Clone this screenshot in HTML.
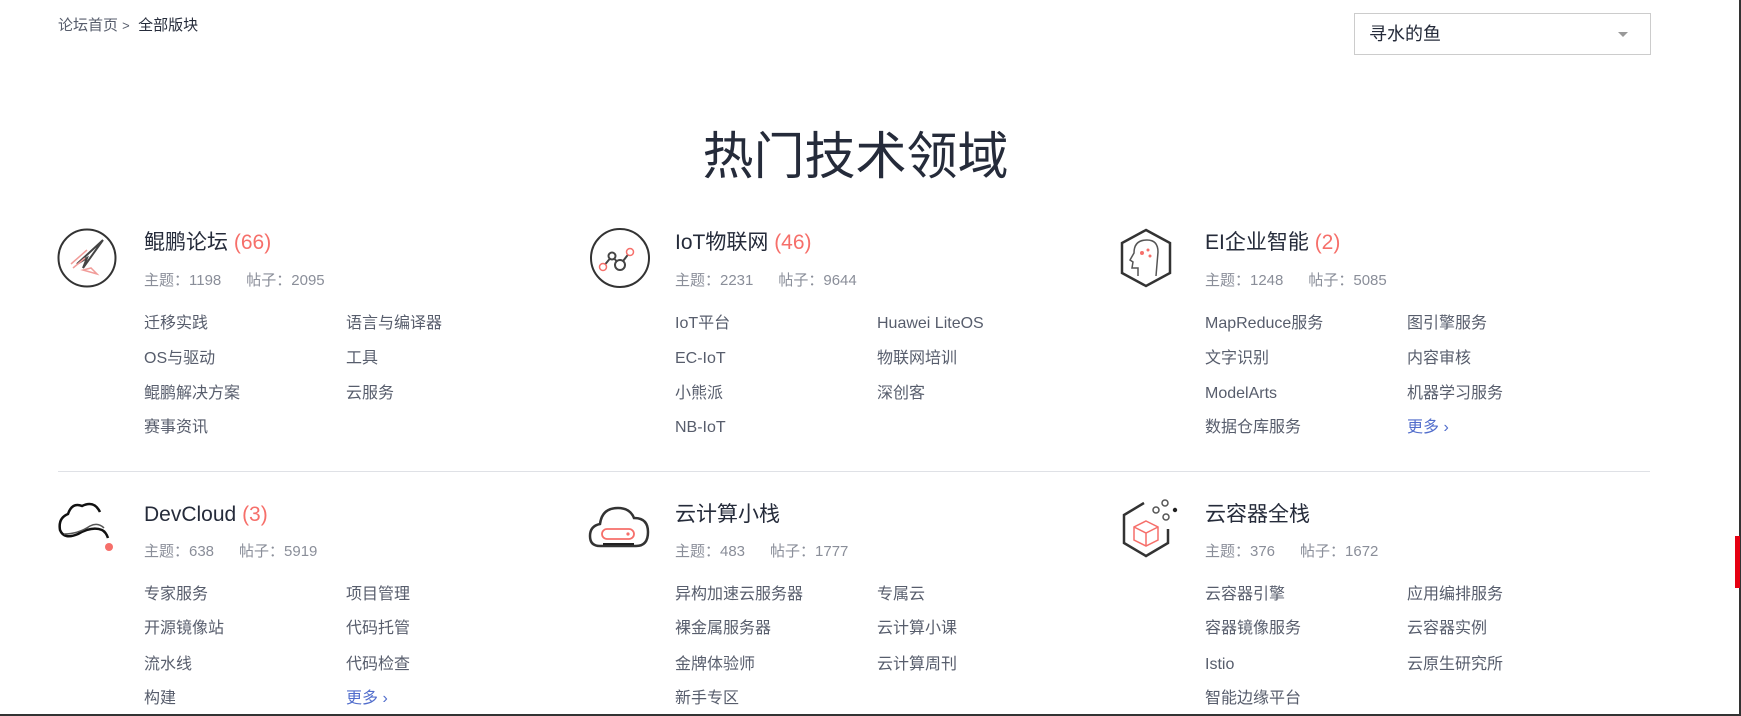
<!DOCTYPE html>
<html><head><meta charset="utf-8"><style>
*{margin:0;padding:0;box-sizing:border-box}
body{width:1741px;height:716px;background:#fff;position:relative;overflow:hidden;font-family:"Liberation Sans","Noto Sans CJK SC",sans-serif;color:#252b3a}
.a{position:absolute;white-space:nowrap}
.bc{top:16px;left:58px;font-size:15px;line-height:20px;color:#575d6c}
.sel{left:1354px;top:13px;width:297px;height:42px;border:1px solid #ccc;font-size:18px;line-height:40px;padding-left:14px;color:#252b3a}
.sel:after{content:"";position:absolute;right:22px;top:18px;border:5px solid transparent;border-top:5px solid #999}
.h1{top:127px;left:0;width:1711px;text-align:center;font-size:51px;line-height:60px;color:#252b3a}
.t{font-size:21px;line-height:28px;color:#252b3a}
.t span{color:#f66f6a}
.s{font-size:15px;line-height:20px;color:#8a8e99}
.l{font-size:16px;line-height:20px;color:#575d6c}
.m{color:#526ecc}
svg.a{overflow:visible}
</style></head><body>
<div class="a bc">论坛首页 <span style="font-size:13px">&gt;</span>&nbsp; <span style="color:#252b3a">全部版块</span></div>
<div class="a sel">寻水的鱼</div>
<div class="a h1">热门技术领域</div>
<div class="a" style="left:58px;top:471px;width:1592px;height:1px;background:#dfe1e6"></div>
<div class="a" style="left:1739px;top:0;width:2px;height:716px;background:#333"></div>
<div class="a" style="left:0;top:714px;width:1741px;height:2px;background:#333"></div>
<div class="a" style="left:1735px;top:536px;width:5px;height:52px;background:#e60012"></div>

<svg class="a" style="left:57px;top:228px" width="60" height="60" viewBox="0 0 60 60"><circle cx="30" cy="30" r="28.5" fill="none" stroke="#333" stroke-width="2"/><path d="M46 12 L20 36 L30 30 L26 40 Z" fill="none" stroke="#444" stroke-width="2"/><path d="M14 36 L30 22 M16 40 L28 30 M26 42 L40 46 L34 40 Z" fill="none" stroke="#f19c99" stroke-width="1.5"/></svg>
<svg class="a" style="left:589px;top:227px" width="62" height="62" viewBox="0 0 62 62"><circle cx="31" cy="31" r="29" fill="none" stroke="#333" stroke-width="2"/><path d="M14 40 L23 29 L31 38 L41 25" fill="none" stroke="#444" stroke-width="2"/><circle cx="14" cy="40" r="3.5" fill="#fff" stroke="#f66f6a" stroke-width="1.5"/><circle cx="23" cy="29" r="3.5" fill="#fff" stroke="#444" stroke-width="2"/><circle cx="31" cy="38" r="5" fill="#fff" stroke="#444" stroke-width="2"/><circle cx="41" cy="25" r="3.5" fill="#fff" stroke="#f66f6a" stroke-width="1.5"/></svg>
<svg class="a" style="left:1118px;top:228px" width="56" height="60" viewBox="0 0 56 60"><path d="M28 2 L52 15 L52 45 L28 58 L4 45 L4 15 Z" fill="none" stroke="#333" stroke-width="2.5"/><path d="M20 48 L20 40 L14 40 L15 34 L12 32 L16 25 Q16 12 29 12 Q40 12 40 24 L38 48" fill="none" stroke="#555" stroke-width="1.5"/><circle cx="24" cy="25" r="2" fill="#f66f6a"/><circle cx="30" cy="22" r="1.5" fill="#f66f6a"/><circle cx="32" cy="28" r="1.5" fill="#f66f6a"/></svg>
<svg class="a" style="left:58px;top:500px" width="60" height="56" viewBox="0 0 60 56"><path d="M42 12 Q36 0 24 6 Q14 2 10 14 Q0 18 2 30 Q6 40 20 34 Q34 26 44 30 Q48 32 50 38" fill="none" stroke="#111" stroke-width="2.5"/><path d="M6 34 Q20 34 32 26 Q40 22 46 28" fill="none" stroke="#555" stroke-width="1.5"/><circle cx="51" cy="47" r="4" fill="#f66f6a"/></svg>
<svg class="a" style="left:588px;top:502px" width="62" height="50" viewBox="0 0 62 50"><path d="M12 44 Q2 44 2 34 Q2 24 12 22 Q14 6 30 6 Q42 6 46 16 Q60 16 60 30 Q60 44 48 44 Z" fill="none" stroke="#333" stroke-width="2.5"/><rect x="14" y="27" width="32" height="10" rx="5" fill="none" stroke="#f66f6a" stroke-width="1.8"/><circle cx="40" cy="32" r="1.6" fill="#f66f6a"/><path d="M15 42 L46 42" stroke="#222" stroke-width="2"/></svg>
<svg class="a" style="left:1120px;top:499px" width="62" height="62" viewBox="0 0 62 62"><path d="M24 4 L4 16 L4 44 L26 57 L48 44 L48 30" fill="none" stroke="#333" stroke-width="2.5"/><path d="M26 22 L38 28 L38 41 L26 47 L14 41 L14 28 Z M14 28 L26 34 L38 28 M26 34 L26 47" fill="none" stroke="#f66f6a" stroke-width="1.5"/><circle cx="36" cy="11" r="3" fill="#fff" stroke="#555" stroke-width="1.5"/><circle cx="45" cy="4" r="3" fill="#fff" stroke="#555" stroke-width="1.5"/><circle cx="46" cy="18" r="3" fill="#fff" stroke="#555" stroke-width="1.5"/><circle cx="55" cy="11" r="2.2" fill="#222"/></svg>

<div class="a t" style="left:144px;top:229px">鲲鹏论坛 <span>(66)</span></div>
<div class="a s" style="left:144px;top:271px">主题：1198 &nbsp;&nbsp;&nbsp;&nbsp; 帖子：2095</div>
<div class="a l" style="left:144px;top:314px">迁移实践</div><div class="a l" style="left:346px;top:314px">语言与编译器</div>
<div class="a l" style="left:144px;top:349px">OS与驱动</div><div class="a l" style="left:346px;top:349px">工具</div>
<div class="a l" style="left:144px;top:384px">鲲鹏解决方案</div><div class="a l" style="left:346px;top:384px">云服务</div>
<div class="a l" style="left:144px;top:418px">赛事资讯</div>
<div class="a t" style="left:675px;top:229px">IoT物联网 <span>(46)</span></div>
<div class="a s" style="left:675px;top:271px">主题：2231 &nbsp;&nbsp;&nbsp;&nbsp; 帖子：9644</div>
<div class="a l" style="left:675px;top:314px">IoT平台</div><div class="a l" style="left:877px;top:314px">Huawei LiteOS</div>
<div class="a l" style="left:675px;top:349px">EC-IoT</div><div class="a l" style="left:877px;top:349px">物联网培训</div>
<div class="a l" style="left:675px;top:384px">小熊派</div><div class="a l" style="left:877px;top:384px">深创客</div>
<div class="a l" style="left:675px;top:418px">NB-IoT</div>
<div class="a t" style="left:1205px;top:229px">EI企业智能 <span>(2)</span></div>
<div class="a s" style="left:1205px;top:271px">主题：1248 &nbsp;&nbsp;&nbsp;&nbsp; 帖子：5085</div>
<div class="a l" style="left:1205px;top:314px">MapReduce服务</div><div class="a l" style="left:1407px;top:314px">图引擎服务</div>
<div class="a l" style="left:1205px;top:349px">文字识别</div><div class="a l" style="left:1407px;top:349px">内容审核</div>
<div class="a l" style="left:1205px;top:384px">ModelArts</div><div class="a l" style="left:1407px;top:384px">机器学习服务</div>
<div class="a l" style="left:1205px;top:418px">数据仓库服务</div><div class="a l m" style="left:1407px;top:418px">更多 ›</div>
<div class="a t" style="left:144px;top:501px">DevCloud <span>(3)</span></div>
<div class="a s" style="left:144px;top:542px">主题：638 &nbsp;&nbsp;&nbsp;&nbsp; 帖子：5919</div>
<div class="a l" style="left:144px;top:585px">专家服务</div><div class="a l" style="left:346px;top:585px">项目管理</div>
<div class="a l" style="left:144px;top:619px">开源镜像站</div><div class="a l" style="left:346px;top:619px">代码托管</div>
<div class="a l" style="left:144px;top:655px">流水线</div><div class="a l" style="left:346px;top:655px">代码检查</div>
<div class="a l" style="left:144px;top:689px">构建</div><div class="a l m" style="left:346px;top:689px">更多 ›</div>
<div class="a t" style="left:675px;top:501px">云计算小栈</div>
<div class="a s" style="left:675px;top:542px">主题：483 &nbsp;&nbsp;&nbsp;&nbsp; 帖子：1777</div>
<div class="a l" style="left:675px;top:585px">异构加速云服务器</div><div class="a l" style="left:877px;top:585px">专属云</div>
<div class="a l" style="left:675px;top:619px">裸金属服务器</div><div class="a l" style="left:877px;top:619px">云计算小课</div>
<div class="a l" style="left:675px;top:655px">金牌体验师</div><div class="a l" style="left:877px;top:655px">云计算周刊</div>
<div class="a l" style="left:675px;top:689px">新手专区</div>
<div class="a t" style="left:1205px;top:501px">云容器全栈</div>
<div class="a s" style="left:1205px;top:542px">主题：376 &nbsp;&nbsp;&nbsp;&nbsp; 帖子：1672</div>
<div class="a l" style="left:1205px;top:585px">云容器引擎</div><div class="a l" style="left:1407px;top:585px">应用编排服务</div>
<div class="a l" style="left:1205px;top:619px">容器镜像服务</div><div class="a l" style="left:1407px;top:619px">云容器实例</div>
<div class="a l" style="left:1205px;top:655px">Istio</div><div class="a l" style="left:1407px;top:655px">云原生研究所</div>
<div class="a l" style="left:1205px;top:689px">智能边缘平台</div>
</body></html>
